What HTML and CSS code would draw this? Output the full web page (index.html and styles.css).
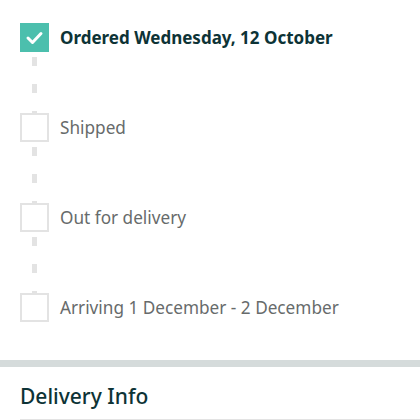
FILE: index.html
```html
<!DOCTYPE html>
<html>
<head>
<meta charset="utf-8">
<link rel="stylesheet" href="styles.css">
</head>
<body>
<div class="timeline">
  <div class="step done">
    <span class="box"><svg viewBox="0 0 29 29" width="29" height="29"><path d="M8 15 L12.5 19.5 L21 10.5" fill="none" stroke="#fff" stroke-width="3" stroke-linecap="round" stroke-linejoin="round"/></svg></span>
    <span class="label">Ordered Wednesday, 12 October</span>
  </div>
  <div class="connector"></div>
  <div class="step">
    <span class="box"></span>
    <span class="label">Shipped</span>
  </div>
  <div class="connector"></div>
  <div class="step">
    <span class="box"></span>
    <span class="label">Out for delivery</span>
  </div>
  <div class="connector"></div>
  <div class="step">
    <span class="box"></span>
    <span class="label">Arriving 1 December - 2 December</span>
  </div>
</div>
<div class="band"></div>
<div class="section">
  <h2 class="title">Delivery Info</h2>
</div>
</body>
</html>
```
FILE: styles.css
```css
html, body {
  margin: 0;
  padding: 0;
  background: #fff;
  font-family: "Noto Sans", "Open Sans", sans-serif;
}
.timeline {
  padding: 23px 20px 38px 20px;
}
.step {
  display: flex;
  align-items: center;
  gap: 11px;
  height: 29px;
}
.box {
  width: 29px;
  height: 29px;
  box-sizing: border-box;
  border: 2px solid #e3e3e3;
  flex: none;
  display: block;
}
.done .box {
  border: none;
  background: #4cbfad;
}
.box svg { display: block; }
.label {
  font-size: 17.2px;
  color: #676b6b;
  white-space: nowrap;
}
.done .label {
  font-size: 17px;
  font-weight: 700;
  color: #0d3336;
}
.connector {
  width: 5px;
  height: 61px;
  margin-left: 12px;
  background: repeating-linear-gradient(to bottom, transparent 0, transparent 5px, #e3e3e3 5px, #e3e3e3 14px, transparent 14px, transparent 27px);
}
.band {
  height: 7px;
  background: #d5dbdb;
}
.section {
  padding: 17px 0 0 20px;
}
.title {
  margin: 0;
  font-size: 21px;
  line-height: 24px;
  font-weight: 500;
  color: #0d3336;
  padding-bottom: 11px;
  border-bottom: 1px solid #e3e3e3;
}
```
